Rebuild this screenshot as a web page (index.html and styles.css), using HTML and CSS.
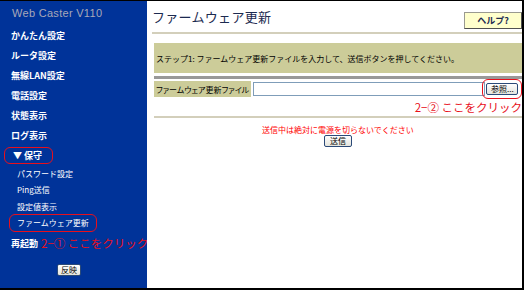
FILE: index.html
```html
<!DOCTYPE html>
<html lang="ja">
<head>
  <meta charset="UTF-8" />
  <title>ファームウェア更新</title>
  <link rel="stylesheet" href="styles.css">
</head>
<body>
  <div class="frame">
    <nav class="side">
      <div class="brand">Web Caster V110</div>
      <ul class="menu">
        <li class="top">かんたん設定</li>
        <li class="top">ルータ設定</li>
        <li class="top">無線LAN設定</li>
        <li class="top">電話設定</li>
        <li class="top">状態表示</li>
        <li class="top">ログ表示</li>
        <li class="top"><span class="mark mark-open">▼ 保守</span></li>
        <li class="sub">パスワード設定</li>
        <li class="sub">Ping送信</li>
        <li class="sub">設定値表示</li>
        <li class="sub"><span class="mark mark-sub">ファームウェア更新</span></li>
        <li class="top reboot">再起動 <span class="note">2−① ここをクリック</span></li>
      </ul>
      <div class="apply"><button class="btn">反映</button></div>
    </nav>

    <main class="content">
      <div class="head">
        <h1>ファームウェア更新</h1>
        <button class="help">ヘルプ?</button>
      </div>

      <div class="body">
        <div class="step">ステップ1: ファームウェア更新ファイルを入力して、送信ボタンを押してください。</div>
        <div class="bar"></div>
        <div class="row">
          <div class="label">ファームウェア更新ファイル</div>
          <div class="field">
            <input type="text" class="file" />
            <span class="browse-mark"><button class="btn">参照...</button></span>
          </div>
        </div>
        <div class="note note-right">2−② ここをクリック</div>
        <div class="rule"></div>
        <div class="warn">送信中は絶対に電源を切らないでください</div>
        <div class="send"><button class="btn">送信</button></div>
      </div>
    </main>
  </div>
</body>
</html>
```

FILE: styles.css
```css
body {
  margin: 0;
  font-family: "Noto Sans CJK JP", sans-serif;
}
.frame {
  width: 524px;
  height: 290px;
  box-sizing: border-box;
  display: flex;
  border-top: 1px solid #000;
  border-right: 2px solid #000;
  border-bottom: 2px solid #000;
  background: #fff;
}

/* left menu */
.side {
  width: 147px;
  flex-shrink: 0;
  background: #003399;
  color: #fff;
}
.brand {
  height: 24px;
  line-height: 24px;
  padding-left: 12px;
  font-family: "Liberation Sans", sans-serif;
  font-size: 11px;
  color: #a8a8b8;
  letter-spacing: 0.3px;
}
.menu {
  list-style: none;
  margin: 0;
  padding: 0;
}
.menu li {
  display: flex;
  align-items: center;
  white-space: nowrap;
}
.top {
  height: 20px;
  padding-left: 11px;
  font-size: 9px;
  font-weight: 700;
}
.sub {
  height: 16.5px;
  padding-left: 17px;
  font-size: 8px;
}
.reboot {
  height: 24px;
}
.mark {
  display: inline-flex;
  align-items: center;
  border: 1.5px solid #e8101c;
  border-radius: 6px;
  box-sizing: border-box;
}
.mark-open {
  height: 17px;
  margin-left: -7px;
  padding: 0 10px 0 8px;
}
.mark-sub {
  height: 18px;
  margin-left: -8px;
  padding: 0 7px;
}
.note {
  color: #e8101c;
  font-size: 11.5px;
  font-weight: 400;
  margin-left: 3px;
}
.apply {
  display: flex;
  padding: 9px 0 0 57px;
}

.btn {
  font-family: "Noto Sans CJK JP", sans-serif;
  font-size: 8px;
  line-height: 10px;
  height: 12px;
  padding: 0 3px;
  color: #000;
  background: linear-gradient(#ffffff, #e4e4dc);
  border: 1px solid #2b4a78;
  border-radius: 2px;
}

/* main area */
.content {
  flex: 1;
  padding: 0 0 0 5px;
}
.head {
  height: 31px;
  display: flex;
  align-items: center;
  justify-content: space-between;
  border-bottom: 2px solid #d3cfbb;
}
h1 {
  margin: 0;
  font-size: 13px;
  font-weight: 400;
  color: #1c2a50;
  letter-spacing: 0.3px;
}
.help {
  width: 58px;
  height: 17px;
  margin-top: 8px;
  padding: 0;
  font-family: "Noto Sans CJK JP", sans-serif;
  font-size: 9px;
  font-weight: 700;
  color: #1c2a50;
  background: #ffffcc;
  border: 1px solid #9a9a90;
  border-right-color: #505050;
  border-bottom-color: #505050;
}
.body {
  padding: 9px 0 0 2px;
}
.step {
  height: 30px;
  display: flex;
  align-items: center;
  padding-left: 2px;
  background: #cccc99;
  font-size: 8px;
  color: #000;
  white-space: nowrap;
}
.bar {
  height: 3px;
  margin-top: 3px;
  background: #999999;
}
.row {
  display: flex;
  height: 16px;
  margin-top: 2px;
}
.label {
  width: 95px;
  padding-left: 2px;
  background: #cccc99;
  font-size: 8px;
  font-feature-settings: "palt";
  display: flex;
  align-items: center;
  white-space: nowrap;
  overflow: hidden;
}
.field {
  flex: 1;
  display: flex;
  align-items: center;
  padding-left: 2px;
}
.file {
  flex: 1;
  height: 14px;
  box-sizing: border-box;
  margin: 0;
  border: 1px solid #7f9db9;
}
.browse-mark {
  display: flex;
  align-items: center;
  justify-content: center;
  width: 40px;
  height: 20px;
  box-sizing: border-box;
  margin-left: -3px;
  border: 1.5px solid #e8101c;
  border-radius: 6px;
}
.browse-mark .btn {
  width: 32px;
  padding: 0 0 0 4px;
  text-align: left;
}
.note-right {
  height: 16px;
  line-height: 16px;
  margin-top: 2px;
  text-align: right;
}
.rule {
  height: 2px;
  margin-top: 1px;
  background: #d3cfbb;
}
.warn {
  height: 10px;
  line-height: 10px;
  margin-top: 7px;
  text-align: center;
  color: #ff0000;
  font-size: 8px;
}
.send {
  display: flex;
  justify-content: center;
}
.send .btn {
  padding: 0 5px;
}
```
